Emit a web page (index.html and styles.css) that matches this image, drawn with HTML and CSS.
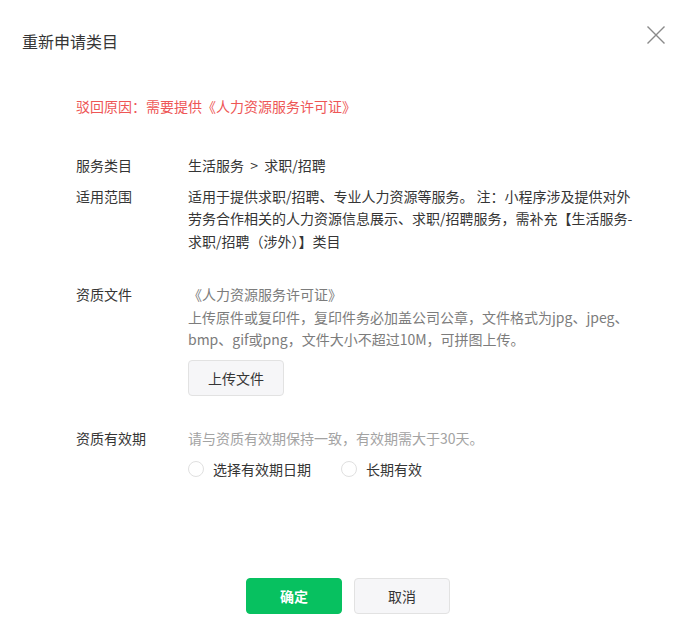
FILE: index.html
```html
<!DOCTYPE html>
<html lang="zh-CN">
<head>
<meta charset="utf-8">
<title>重新申请类目</title>
<link rel="stylesheet" href="styles.css">
</head>
<body>
<div class="dialog">
  <div class="dialog-hd">
    <h3 class="dialog-title">重新申请类目</h3>
    <button class="dialog-close" type="button" aria-label="关闭">
      <svg width="20" height="20" viewBox="0 0 20 20"><path d="M1.5 1.5 L18.5 18.5 M18.5 1.5 L1.5 18.5" stroke="#8a8a8a" stroke-width="1.4" fill="none"/></svg>
    </button>
  </div>

  <div class="dialog-bd">
    <p class="reject">驳回原因：需要提供《人力资源服务许可证》</p>

    <div class="group">
      <div class="row">
        <div class="label">服务类目</div>
        <div class="value">生活服务&nbsp;&nbsp;&gt;&nbsp;&nbsp;求职/招聘</div>
      </div>
      <div class="row">
        <div class="label">适用范围</div>
        <div class="value">适用于提供求职/招聘、专业人力资源等服务。 注：小程序涉及提供对外劳务合作相关的人力资源信息展示、求职/招聘服务，需补充【生活服务-求职/招聘（涉外）】类目</div>
      </div>
    </div>

    <div class="group">
      <div class="row">
        <div class="label">资质文件</div>
        <div class="value">
          <div class="muted">《人力资源服务许可证》</div>
          <div class="muted">上传原件或复印件，复印件务必加盖公司公章，文件格式为jpg、jpeg、bmp、gif或png，文件大小不超过10M，可拼图上传。</div>
          <button class="btn btn-default btn-upload" type="button">上传文件</button>
        </div>
      </div>
    </div>

    <div class="group">
      <div class="row">
        <div class="label">资质有效期</div>
        <div class="value">
          <div class="hint">请与资质有效期保持一致，有效期需大于30天。</div>
          <div class="radios">
            <label class="radio"><span class="radio-icon"></span>选择有效期日期</label>
            <label class="radio"><span class="radio-icon"></span>长期有效</label>
          </div>
        </div>
      </div>
    </div>
  </div>

  <div class="dialog-ft">
    <button class="btn btn-primary" type="button">确定</button>
    <button class="btn btn-default" type="button">取消</button>
  </div>
</div>
</body>
</html>
```

FILE: styles.css
```css
html, body {
  margin: 0;
  padding: 0;
  background: #fff;
}

body {
  font-family: "Noto Sans CJK SC", "Noto Sans", sans-serif;
  font-size: 14px;
  color: #353535;
}

.dialog {
  position: relative;
  width: 691px;
  height: 640px;
  box-sizing: border-box;
}

.dialog-hd {
  padding: 29px 22px 0;
}

.dialog-title {
  margin: 0;
  font-size: 16px;
  font-weight: normal;
  line-height: 24px;
  color: #353535;
}

.dialog-close {
  position: absolute;
  top: 25px;
  right: 25px;
  width: 20px;
  height: 20px;
  padding: 0;
  border: 0;
  background: none;
  cursor: pointer;
}

.dialog-close svg {
  display: block;
}

.dialog-bd {
  padding: 42px 0 0 76px;
}

.reject {
  margin: 0 0 37px;
  line-height: 22px;
  color: #ee5656;
}

.group {
  display: flex;
  flex-direction: column;
  gap: 8px;
  margin-bottom: 31px;
}

.row {
  display: flex;
  line-height: 22.5px;
}

.label {
  flex: none;
  width: 112px;
  color: #353535;
}

.value {
  width: 452px;
  color: #353535;
}

.muted {
  color: #7c7c7c;
}

.hint {
  color: #a3a3a3;
}

.btn {
  box-sizing: border-box;
  width: 96px;
  height: 36px;
  padding: 0;
  border-radius: 4px;
  font-family: inherit;
  font-size: 14px;
  cursor: pointer;
}

.btn-default {
  border: 1px solid #e2e2e2;
  background: #f6f6f8;
  color: #353535;
}

.btn-primary {
  border: 1px solid #07c160;
  background: #07c160;
  color: #fff;
  font-weight: bold;
}

.btn-upload {
  display: block;
  margin-top: 9px;
}

.radios {
  display: flex;
  gap: 30px;
  margin-top: 9px;
}

.radio {
  display: flex;
  align-items: center;
  gap: 9px;
  color: #353535;
  cursor: pointer;
}

.radio-icon {
  box-sizing: border-box;
  width: 16px;
  height: 16px;
  border: 1px solid #e0e0e0;
  border-radius: 50%;
  background: #fff;
}

.dialog-ft {
  position: absolute;
  left: 0;
  right: 0;
  bottom: 26px;
  display: flex;
  justify-content: center;
  gap: 12px;
  padding-left: 5px;
}
```
